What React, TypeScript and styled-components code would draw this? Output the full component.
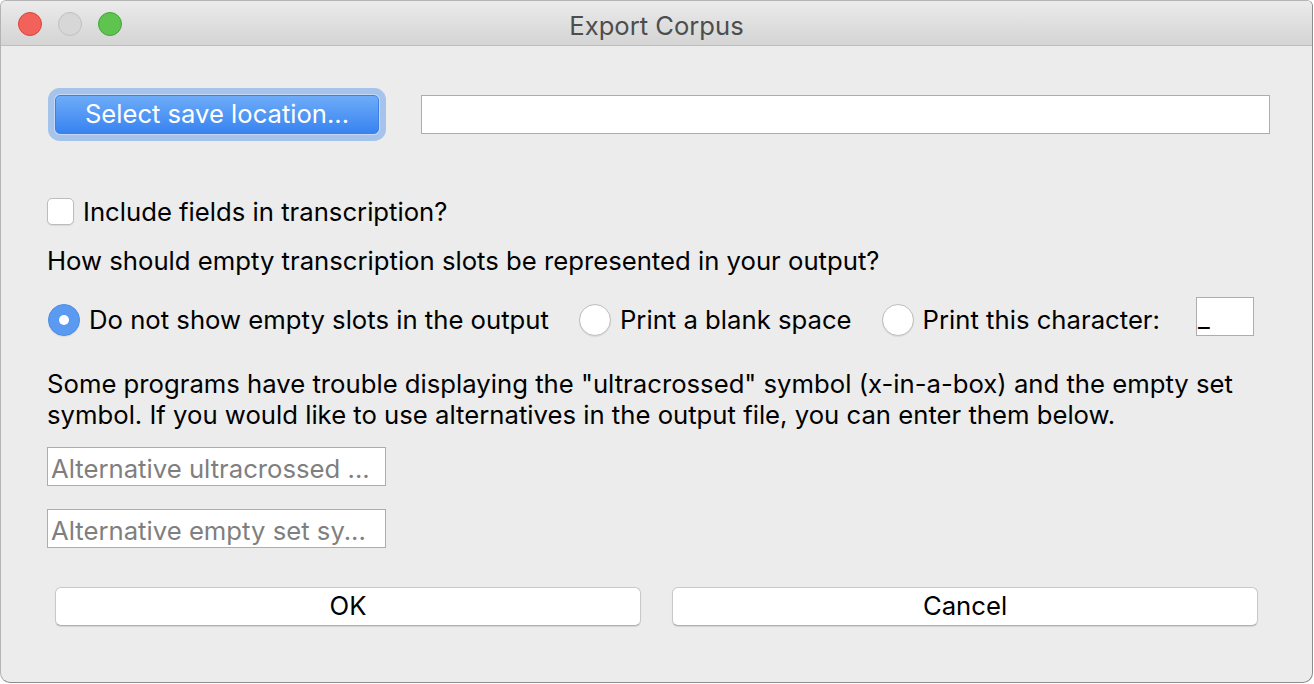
import React from "react";
import styled, { createGlobalStyle } from "styled-components";

const Global = createGlobalStyle`
  html, body { margin: 0; padding: 0; background: #ffffff; }
  * { box-sizing: border-box; }
`;

const FONT = `Inter, "Liberation Sans", Arial, sans-serif`;

const Window = styled.div`
  width: 1313px;
  height: 683px;
  background: #ececec;
  border: 1px solid #b4b4b4;
  border-right-color: #8c8c8c;
  border-bottom-color: #8c8c8c;
  border-radius: 6px 6px 10px 10px;
  overflow: hidden;
  display: flex;
  flex-direction: column;
  font-family: ${FONT};
  font-size: 25.7px;
  color: #000;
`;

const TitleBar = styled.div`
  height: 45px;
  flex: none;
  display: grid;
  grid-template-columns: 1fr auto 1fr;
  align-items: center;
  padding-top: 1px;
  background: linear-gradient(#ebebeb, #d4d4d4);
  border-bottom: 1px solid #bfbfbf;
`;

const Lights = styled.div`
  display: flex;
  gap: 16px;
  padding-left: 17px;
`;

const Light = styled.span<{ $fill: string; $edge: string }>`
  width: 24px;
  height: 24px;
  border-radius: 50%;
  background: ${(p) => p.$fill};
  border: 1px solid ${(p) => p.$edge};
`;

const Title = styled.div`
  font-size: 25.6px;
  color: #4d4d4d;
  padding-top: 3px;
`;

const Body = styled.div`
  display: flex;
  flex-direction: column;
  padding: 0 42px 0 46px;
`;

const LocationRow = styled.div`
  display: flex;
  align-items: center;
  margin-top: 49px;
  padding-left: 8px;
  gap: 42px;
`;

const PrimaryButton = styled.button`
  width: 324px;
  height: 39px;
  flex: none;
  border-radius: 5px;
  border: 1px solid #3d7fe6;
  background: linear-gradient(#6eacf8, #3883f1);
  color: #ffffff;
  font-family: ${FONT};
  font-size: 25.6px;
  padding: 0 0 2px;
  box-shadow: 0 0 0 1px #c6d9f4, 0 0 0 7px #a6c3ec;
`;

const TextField = styled.div<{ $w?: number }>`
  height: 39px;
  ${(p) => (p.$w ? `width: ${p.$w}px; flex: none;` : `flex: 1;`)}
  background: #ffffff;
  border: 1px solid #adadad;
  display: flex;
  align-items: center;
  padding: 3px 4px 0 3px;
  color: #7f7f7f;
  white-space: nowrap;
  overflow: hidden;
`;

const CharField = styled(TextField)`
  align-items: flex-end;
  color: #000;
  padding: 0 0 2px 1px;
  margin-left: 36px;
`;

const CheckRow = styled.label`
  display: flex;
  align-items: center;
  gap: 9px;
  margin-top: 64px;
  height: 27px;
`;

const Checkbox = styled.span`
  width: 27px;
  height: 27px;
  border-radius: 5px;
  background: #ffffff;
  border: 1px solid #bcbcbc;
  box-shadow: 0 1px 1px rgba(0, 0, 0, 0.08);
  flex: none;
`;

const Question = styled.div`
  margin-top: 21px;
  line-height: 30px;
`;

const RadioRow = styled.div`
  display: flex;
  align-items: center;
  height: 39px;
  margin-top: 21px;
  padding-left: 1px;
`;

const RadioOption = styled.label`
  display: flex;
  align-items: center;
  gap: 9px;
  margin: 6px 30px 0 0;
  &:last-of-type { margin-right: 0; }
`;

const Radio = styled.span<{ $on?: boolean }>`
  width: 32px;
  height: 32px;
  border-radius: 50%;
  flex: none;
  display: flex;
  align-items: center;
  justify-content: center;
  background: ${(p) => (p.$on ? "#5a9af1" : "#ffffff")};
  border: 1px solid ${(p) => (p.$on ? "#4f8de8" : "#bdbdbd")};
  box-shadow: 0 1px 1px rgba(0, 0, 0, 0.08);
  &::after {
    content: "";
    display: ${(p) => (p.$on ? "block" : "none")};
    width: 10px;
    height: 10px;
    border-radius: 50%;
    background: #ffffff;
  }
`;

const Paragraph = styled.p`
  margin: 32px 0 0;
  line-height: 31px;
`;

const AltField = styled(TextField)<{ $top?: number }>`
  margin-top: ${(p) => p.$top ?? 0}px;
`;

const ButtonRow = styled.div`
  display: flex;
  gap: 31px;
  margin: 39px 12px 0 8px;
`;

const PlainButton = styled.button`
  flex: 1;
  height: 39px;
  background: #ffffff;
  border: 1px solid #c8c8c8;
  border-bottom-color: #b0b0b0;
  border-radius: 6px;
  box-shadow: 0 1px 1px rgba(0, 0, 0, 0.1);
  font-family: ${FONT};
  font-size: 25.7px;
  color: #000;
  padding: 0 0 2px;
`;

export default function App() {
  return (
    <>
      <Global />
      <Window>
        <TitleBar>
          <Lights>
            <Light $fill="#f2625a" $edge="#d8463f" />
            <Light $fill="#d7d7d7" $edge="#c0c0c0" />
            <Light $fill="#5ec44f" $edge="#43a63a" />
          </Lights>
          <Title>Export Corpus</Title>
          <span />
        </TitleBar>
        <Body>
          <LocationRow>
            <PrimaryButton>Select save location...</PrimaryButton>
            <TextField />
          </LocationRow>
          <CheckRow>
            <Checkbox />
            <span>Include fields in transcription?</span>
          </CheckRow>
          <Question>How should empty transcription slots be represented in your output?</Question>
          <RadioRow>
            <RadioOption>
              <Radio $on />
              <span>Do not show empty slots in the output</span>
            </RadioOption>
            <RadioOption>
              <Radio />
              <span>Print a blank space</span>
            </RadioOption>
            <RadioOption>
              <Radio />
              <span>Print this character:</span>
            </RadioOption>
            <CharField $w={58}>_</CharField>
          </RadioRow>
          <Paragraph>
            Some programs have trouble displaying the "ultracrossed" symbol (x-in-a-box) and the empty set
            <br />
            symbol. If you would like to use alternatives in the output file, you can enter them below.
          </Paragraph>
          <AltField $w={339} $top={17}>Alternative ultracrossed ...</AltField>
          <AltField $w={339} $top={23}>Alternative empty set sy...</AltField>
          <ButtonRow>
            <PlainButton>OK</PlainButton>
            <PlainButton>Cancel</PlainButton>
          </ButtonRow>
        </Body>
      </Window>
    </>
  );
}
